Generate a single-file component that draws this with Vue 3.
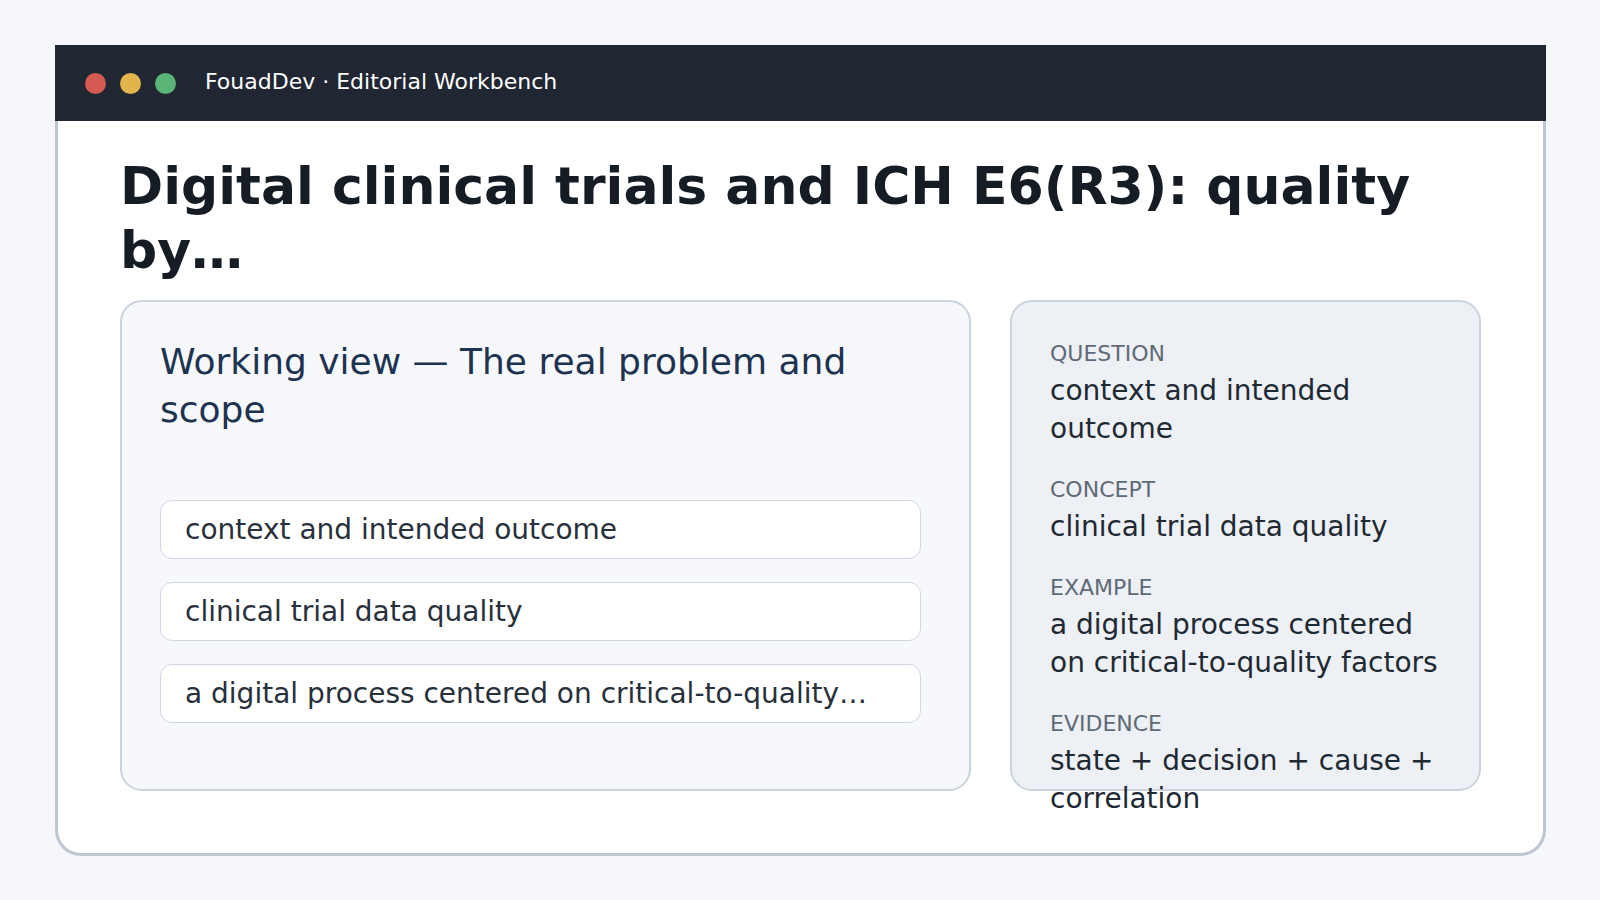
<script setup>
const rows = ['context and intended outcome', 'clinical trial data quality', 'a digital process centered on critical-to-quality…']
const notes = [
  { label: 'QUESTION', text: 'context and intended outcome' },
  { label: 'CONCEPT', text: 'clinical trial data quality' },
  { label: 'EXAMPLE', text: 'a digital process centered on critical-to-quality factors' },
  { label: 'EVIDENCE', text: 'state + decision + cause + correlation' },
]
</script>

<template>
  <div class="page">
    <div class="window">
      <header class="bar">
        <span class="dot red"></span>
        <span class="dot yellow"></span>
        <span class="dot green"></span>
        <span class="app-name">FouadDev · Editorial Workbench</span>
      </header>
      <main class="content">
        <h1>Digital clinical trials and ICH E6(R3): quality by…</h1>
        <div class="panels">
          <section class="panel work">
            <h2>Working view — The real problem and scope</h2>
            <ul>
              <li v-for="row in rows" :key="row">{{ row }}</li>
            </ul>
          </section>
          <aside class="panel side">
            <dl>
              <div v-for="note in notes" :key="note.label" class="note">
                <dt>{{ note.label }}</dt>
                <dd>{{ note.text }}</dd>
              </div>
            </dl>
          </aside>
        </div>
      </main>
    </div>
  </div>
</template>

<style>
body {
  background: #f5f7fb;
}
</style>

<style scoped>
.page {
  box-sizing: border-box;
  min-height: 100vh;
  padding: 45px 54px 44px 55px;
  display: flex;
  font-family: "DejaVu Sans", sans-serif;
  color: #1f2933;
}
.window {
  box-sizing: border-box;
  flex: 1;
  display: flex;
  flex-direction: column;
  border: 3px solid #bdc6d2;
  border-top: 0;
  border-radius: 0 0 26px 26px;
  background: #fff;
}
.bar {
  display: flex;
  align-items: center;
  height: 76px;
  margin: 0 -3px;
  padding-left: 30px;
  background: #202632;
  color: #fff;
}
.dot {
  width: 21px;
  height: 21px;
  margin-right: 14px;
  border-radius: 50%;
}
.red { background: #d55b52; }
.yellow { background: #e2b44c; }
.green { background: #5bb478; }
.app-name {
  margin-left: 15px;
  padding-bottom: 2px;
  font-size: 22px;
  line-height: 26px;
}
.content {
  flex: 1;
  display: flex;
  flex-direction: column;
  padding: 33px 62px 62px;
}
h1 {
  margin: 0 0 18px;
  font-size: 52px;
  line-height: 64px;
  color: #161c24;
}
.panels {
  flex: 1;
  display: grid;
  grid-template-columns: 851fr 471fr;
  gap: 39px;
}
.panel {
  box-sizing: border-box;
  border: 2px solid #cbd3de;
  border-radius: 22px;
}
.work {
  padding: 36px 48px 48px 38px;
  background: #f7f8fc;
}
/* The side notes never stretch the row; a long list runs past the panel. */
.side {
  height: 0;
  min-height: 100%;
  padding: 39px 38px 0;
  background: #edf0f5;
}
h2 {
  margin: 0;
  font-size: 36px;
  font-weight: 400;
  line-height: 48px;
  color: #1d3350;
}
ul {
  list-style: none;
  margin: 66px 0 0;
  padding: 0;
  display: grid;
  gap: 23px;
}
li {
  box-sizing: border-box;
  padding: 0 24px;
  border: 1px solid #d0d7e2;
  border-radius: 12px;
  background: #fff;
  font-size: 28px;
  line-height: 57px;
  color: #27303b;
}
dl {
  margin: 0;
}
.note {
  margin-bottom: 29px;
}
dt {
  margin-bottom: 5px;
  font-size: 22px;
  line-height: 26px;
  color: #606a76;
}
dd {
  margin: 0;
  font-size: 28px;
  line-height: 38px;
}
</style>
